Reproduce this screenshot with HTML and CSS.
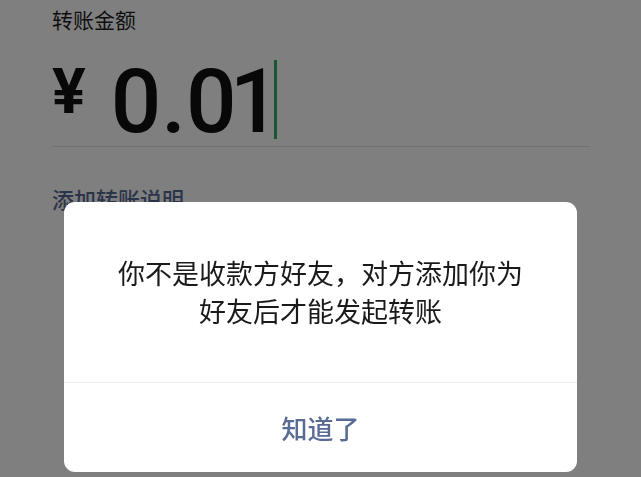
FILE: index.html
```html
<!DOCTYPE html>
<html lang="zh-CN">
<head>
    <meta charset="UTF-8">
    <meta name="viewport" content="width=device-width, initial-scale=1.0">
    <title>转账</title>
    <link rel="stylesheet" href="styles.css">
</head>
<body>
    <div class="page">
        <div class="label">转账金额</div>
        <div class="amount">
            <span class="yen">¥</span>
            <span class="num">0.<span class="tight">0</span>1</span>
            <span class="cursor"></span>
        </div>
        <div class="border"></div>
        <div class="remark">添加转账说明</div>
    </div>
    <div class="mask">
        <div class="dialog">
            <div class="msg">你不是收款方好友，对方添加你为好友后才能发起转账</div>
            <div class="btn">知道了</div>
        </div>
    </div>
</body>
</html>
```

FILE: styles.css
```css
*{
    box-sizing: border-box;
}
html,body{
    margin: 0;
    height: 100%;
    overflow: hidden;
}
body{
    background: #fff;
    font-family: "Noto Sans CJK SC", "Noto Sans", sans-serif;
    color: #1a1a1a;
}
.page{
    padding: 0 51px 0 52px;
}
.label{
    font-size: 21px;
    line-height: 30px;
    padding-top: 4px;
    color: #1f1f1f;
}
.amount{
    display: flex;
    align-items: flex-start;
    height: 112px;
    padding-top: 22px;
}
.yen{
    font-family: Roboto, "Liberation Sans", sans-serif;
    font-weight: 700;
    font-size: 63px;
    line-height: 62px;
    margin-top: 5px;
    color: #111;
}
.num{
    font-family: Roboto, "Liberation Sans", sans-serif;
    font-weight: 500;
    font-size: 89px;
    line-height: 91px;
    margin-left: 25px;
    color: #111;
}
.tight{
    letter-spacing: -7px;
}
.cursor{
    width: 3px;
    height: 79px;
    margin-left: -6px;
    margin-top: 4px;
    background: #32a866;
}
.border{
    border-top: 1px solid #e2e2e2;
}
.remark{
    margin-top: 36px;
    font-size: 22px;
    line-height: 30px;
    font-weight: 500;
    color: #576b95;
}
.mask{
    position: fixed;
    top: 0;
    left: 0;
    right: 0;
    bottom: 0;
    background: rgba(0,0,0,.5);
    display: flex;
    justify-content: center;
    padding-top: 202px;
}
.dialog{
    width: 513px;
    height: 270px;
    background: #fff;
    border-radius: 11px;
    overflow: hidden;
}
.msg{
    height: 181px;
    padding: 0 48px;
    display: flex;
    align-items: center;
    justify-content: center;
    text-align: center;
    font-size: 27px;
    line-height: 38px;
    color: #1a1a1a;
    border-bottom: 1px solid #ededed;
}
.btn{
    height: 89px;
    display: flex;
    align-items: center;
    justify-content: center;
    font-size: 26px;
    font-weight: 500;
    color: #576b95;
}
```
